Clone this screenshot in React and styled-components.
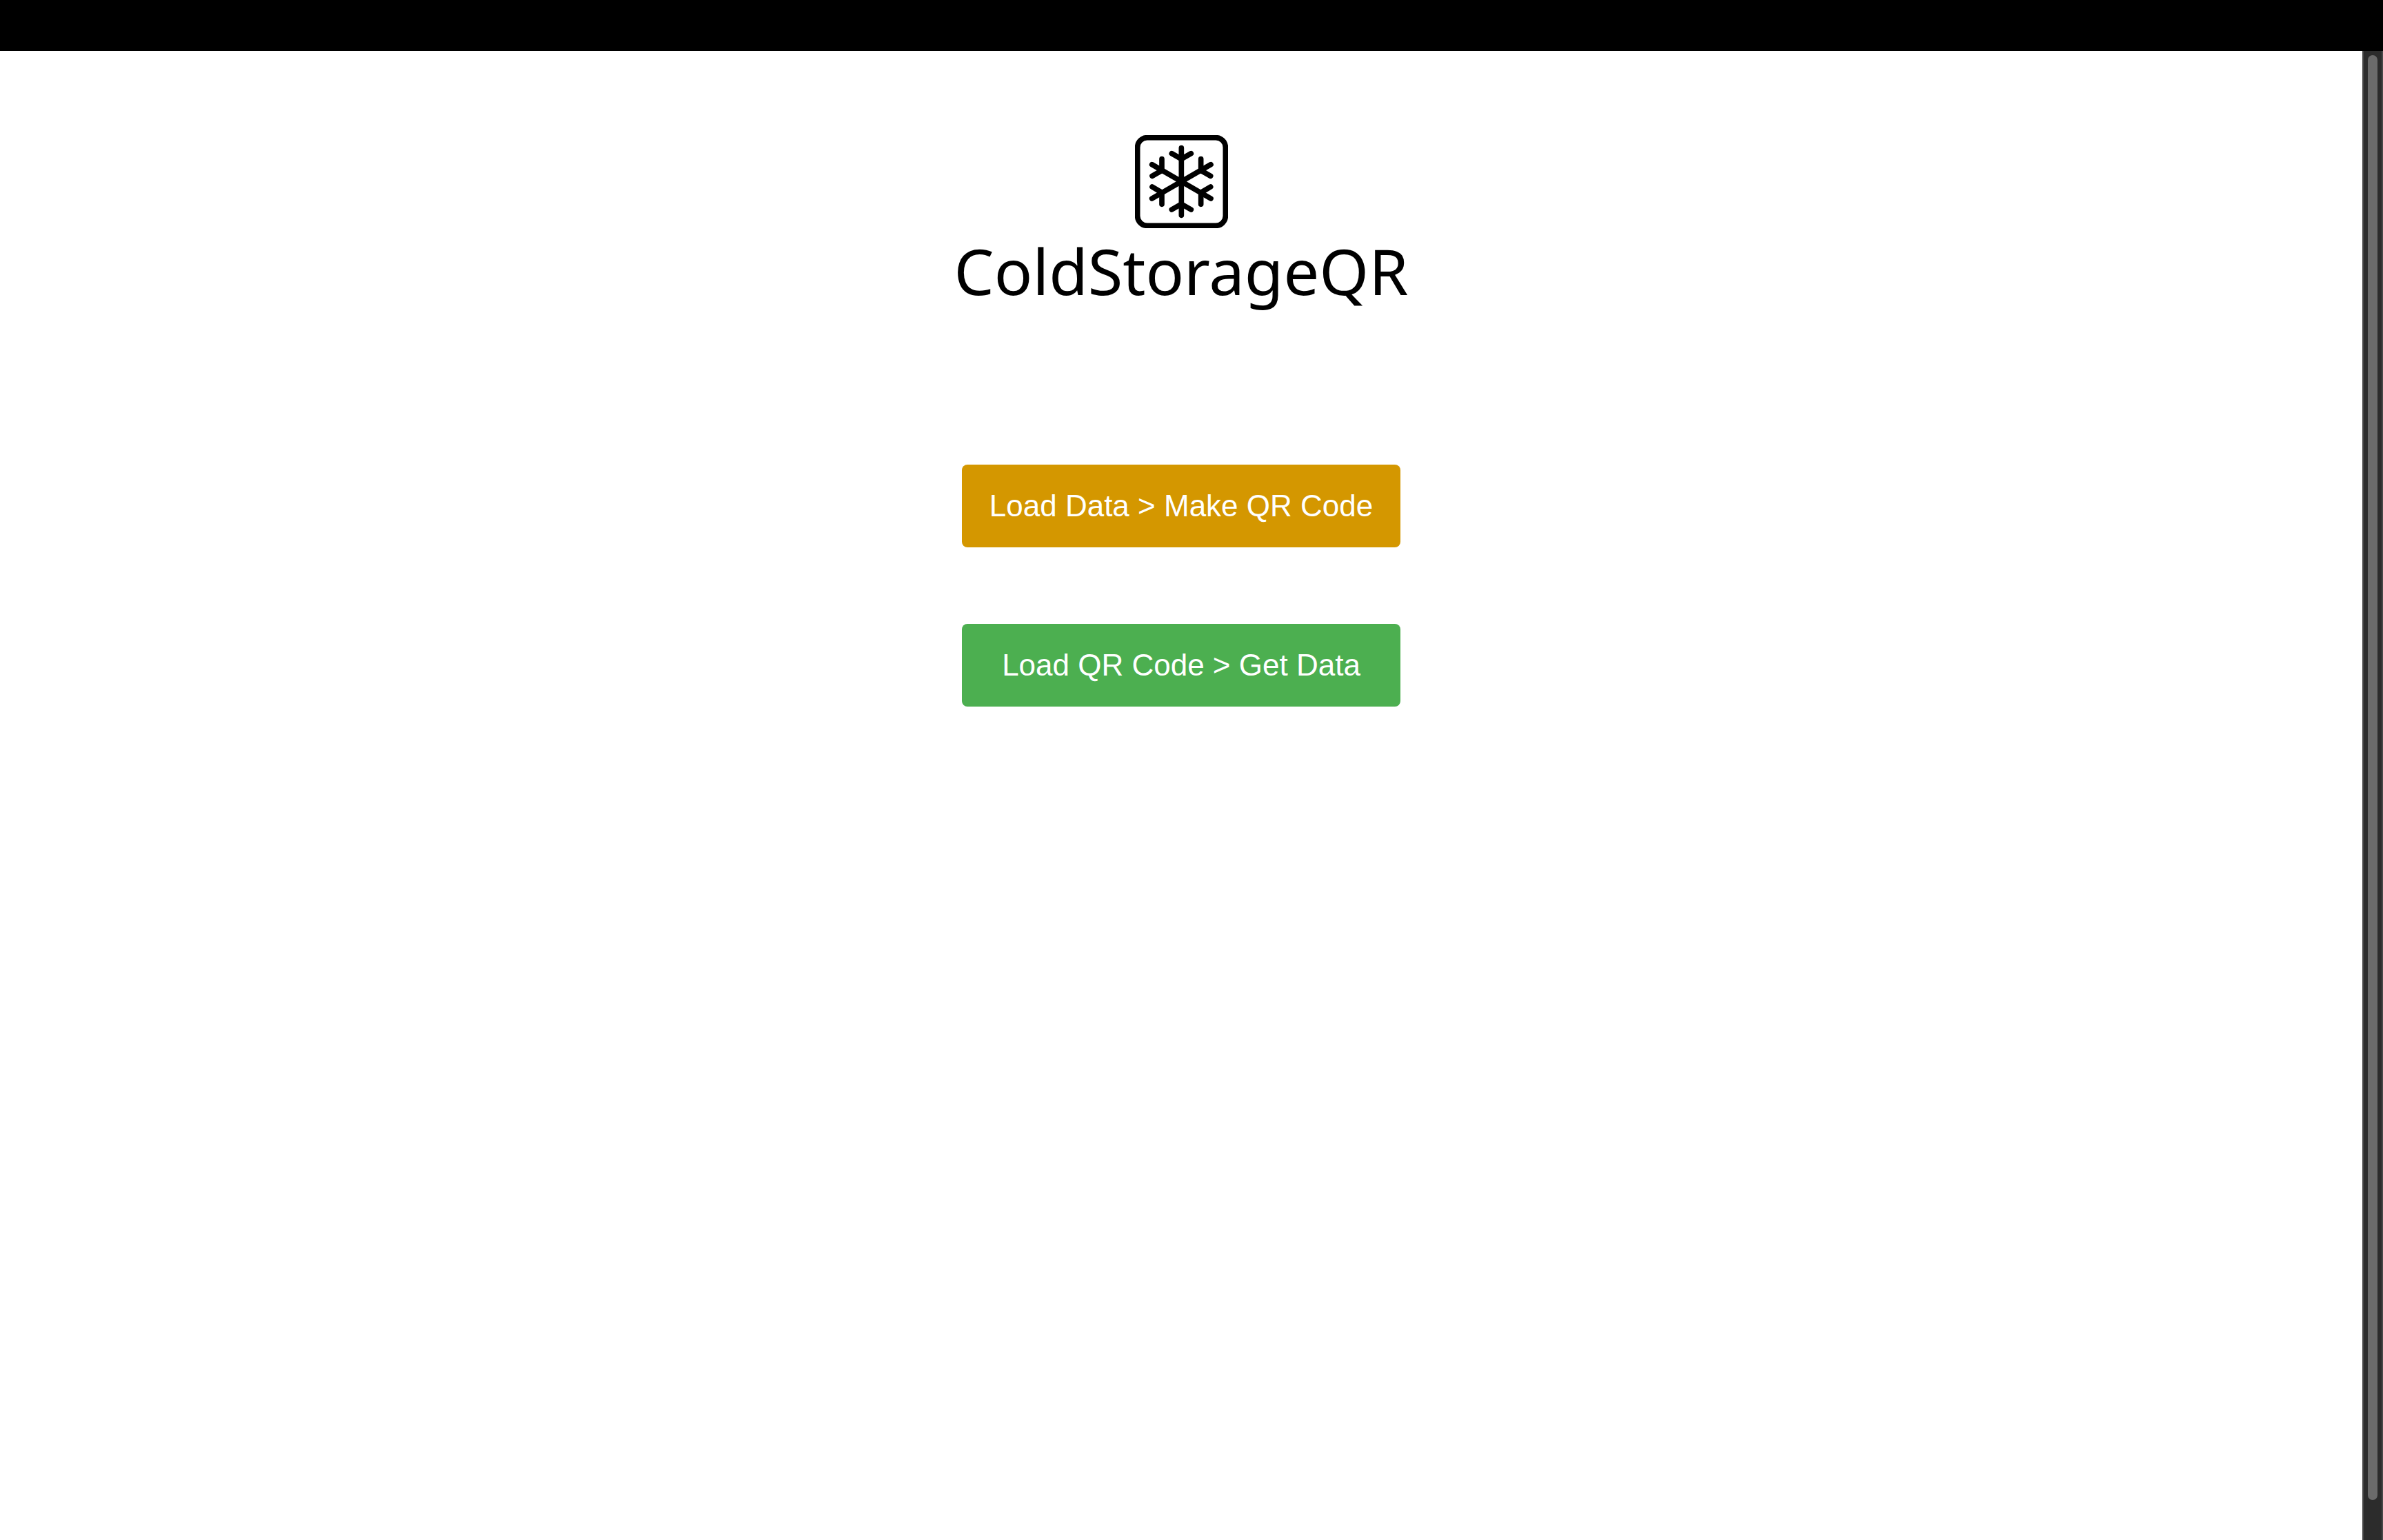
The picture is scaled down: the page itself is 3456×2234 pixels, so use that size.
import React from "react";
import styled, { createGlobalStyle } from "styled-components";

const GlobalStyle = createGlobalStyle`
  * {
    box-sizing: border-box;
  }
  body {
    margin: 0;
    background: #fff;
    font-family: "Liberation Sans", Arial, sans-serif;
  }
`;

const Screen = styled.div`
  display: flex;
  flex-direction: column;
  min-height: 100vh;
`;

const TopBar = styled.header`
  flex: none;
  height: 74px;
  background: #000;
`;

const Viewport = styled.div`
  display: flex;
  flex: 1;
`;

const Content = styled.main`
  display: flex;
  flex: 1;
  flex-direction: column;
  align-items: center;
  padding-top: 122px;
`;

const Brand = styled.h1`
  display: flex;
  flex-direction: column;
  align-items: center;
  margin: 0 0 220px;
  color: #000;
  font-family: "Noto Sans", sans-serif;
  font-size: 92px;
  font-weight: 400;
  line-height: 123px;
`;

const Mark = styled.svg`
  display: block;
  width: 135px;
  height: 135px;
  fill: none;
  stroke: currentColor;
  stroke-width: 23;
  stroke-linecap: round;
  stroke-linejoin: round;
`;

const Actions = styled.nav`
  display: grid;
  gap: 111px;
`;

const ActionButton = styled.button`
  height: 120px;
  padding: 0 40px;
  border: 0;
  border-radius: 8px;
  background: ${({ $color }) => $color};
  color: #fff;
  font-family: inherit;
  font-size: 44px;
  line-height: 52px;
  cursor: pointer;
`;

const ScrollTrack = styled.div`
  display: flex;
  flex: none;
  width: 30px;
  padding: 6px;
  border: solid #484848;
  border-width: 0 2px;
  background: #2c2c2c;
`;

const ScrollThumb = styled.div`
  flex: 1;
  height: 97.6%;
  border-radius: 8px;
  background: #6b6b6b;
`;

function Snowflake() {
  return (
    <Mark viewBox="47 48 405 405" aria-hidden="true">
      <rect x="58" y="59" width="383" height="383" rx="42" />
      <path d="M249 104V397M121 176L377 324M377 176L121 324" />
      <path d="M207 128L249 152L291 128M207 372L249 348L291 372" />
      <path d="M164 152V202L122 226M334 152V202L376 226" />
      <path d="M122 273L164 298V349M376 273L334 298V349" />
    </Mark>
  );
}

export default function App() {
  return (
    <>
      <GlobalStyle />
      <Screen>
        <TopBar />
        <Viewport>
          <Content>
            <Brand>
              <Snowflake />
              ColdStorageQR
            </Brand>
            <Actions>
              <ActionButton type="button" $color="#d49700">
                Load Data &gt; Make QR Code
              </ActionButton>
              <ActionButton type="button" $color="#4caf50">
                Load QR Code &gt; Get Data
              </ActionButton>
            </Actions>
          </Content>
          <ScrollTrack aria-hidden="true">
            <ScrollThumb />
          </ScrollTrack>
        </Viewport>
      </Screen>
    </>
  );
}
